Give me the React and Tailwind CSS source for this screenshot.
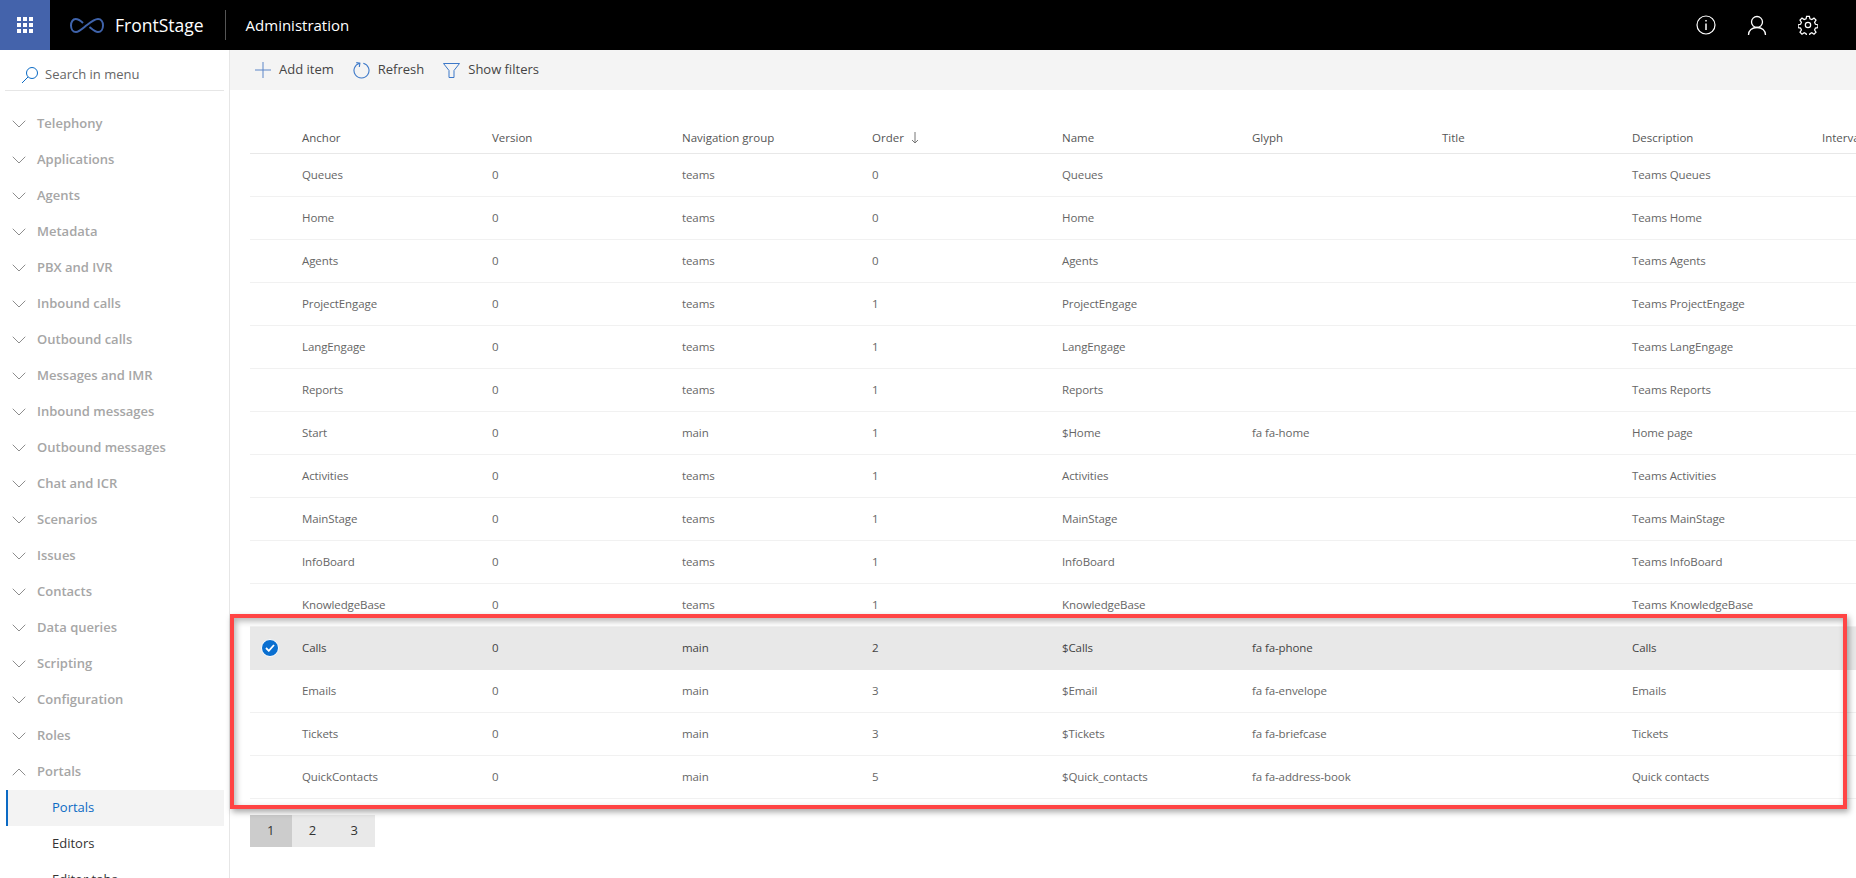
import { ChevronDown, ChevronUp } from 'lucide-react';

const menu = [
  'Telephony', 'Applications', 'Agents', 'Metadata', 'PBX and IVR', 'Inbound calls', 'Outbound calls',
  'Messages and IMR', 'Inbound messages', 'Outbound messages', 'Chat and ICR', 'Scenarios', 'Issues',
  'Contacts', 'Data queries', 'Scripting', 'Configuration', 'Roles',
];

const columns = ['Anchor', 'Version', 'Navigation group', 'Order', 'Name', 'Glyph', 'Title', 'Description', 'Interval'];

const rows = [
  ['Queues', '0', 'teams', '0', 'Queues', '', '', 'Teams Queues'],
  ['Home', '0', 'teams', '0', 'Home', '', '', 'Teams Home'],
  ['Agents', '0', 'teams', '0', 'Agents', '', '', 'Teams Agents'],
  ['ProjectEngage', '0', 'teams', '1', 'ProjectEngage', '', '', 'Teams ProjectEngage'],
  ['LangEngage', '0', 'teams', '1', 'LangEngage', '', '', 'Teams LangEngage'],
  ['Reports', '0', 'teams', '1', 'Reports', '', '', 'Teams Reports'],
  ['Start', '0', 'main', '1', '$Home', 'fa fa-home', '', 'Home page'],
  ['Activities', '0', 'teams', '1', 'Activities', '', '', 'Teams Activities'],
  ['MainStage', '0', 'teams', '1', 'MainStage', '', '', 'Teams MainStage'],
  ['InfoBoard', '0', 'teams', '1', 'InfoBoard', '', '', 'Teams InfoBoard'],
  ['KnowledgeBase', '0', 'teams', '1', 'KnowledgeBase', '', '', 'Teams KnowledgeBase'],
  ['Calls', '0', 'main', '2', '$Calls', 'fa fa-phone', '', 'Calls'],
  ['Emails', '0', 'main', '3', '$Email', 'fa fa-envelope', '', 'Emails'],
  ['Tickets', '0', 'main', '3', '$Tickets', 'fa fa-briefcase', '', 'Tickets'],
  ['QuickContacts', '0', 'main', '5', '$Quick_contacts', 'fa fa-address-book', '', 'Quick contacts'],
];

function Logo() {
  return (
    <svg width="34" height="17" viewBox="0 0 34 17" fill="none" stroke="#3f63ab" strokeWidth="2">
      <path d="M13 6C10 3 7.500 2 5.500 2 3 2 1 5 1 8.500 1 12 3 15 6 15c3 0 6-3 11-7 5-4 8-6 11-6 3 0 5 3 5 6.500C33 12 31 15 28 15c-3 0-6-3-8.500-5" />
    </svg>
  );
}

function Waffle() {
  return (
    <svg width="16" height="16" viewBox="0 0 16 16" fill="white">
      {[0, 6, 12].map((y) => [0, 6, 12].map((x) => <rect key={`${x}-${y}`} x={x} y={y} width="4" height="4" />))}
    </svg>
  );
}

function ToolButton({ icon, label }) {
  return (
    <div className="flex items-center gap-[8px] text-[13px] text-[#444]">
      {icon}
      <span>{label}</span>
    </div>
  );
}

export default function App() {
  return (
    <div className="h-screen w-full overflow-hidden flex flex-col bg-white font-['Open_Sans',sans-serif] relative">
      {/* Top bar */}
      <header className="h-[50px] shrink-0 bg-black flex items-center text-white">
        <div className="w-[50px] h-full bg-[#4463ab] flex items-center justify-center">
          <Waffle />
        </div>
        <div className="ml-[20px] flex"><Logo /></div>
        <span className="ml-[11px] text-[17.5px]">FrontStage</span>
        <div className="ml-[21px] w-px h-[30px] bg-[#555]" />
        <span className="ml-[20px] text-[15px]">Administration</span>
        <div className="ml-auto flex items-center gap-[31px] pr-[38px]">
          <svg width="20" height="20" viewBox="0 0 20 20" fill="none" stroke="white" strokeWidth="1.2">
            <circle cx="10" cy="10" r="9" />
            <path d="M10 8.500V15" strokeWidth="1.500" />
            <path d="M10 5v1.500" strokeWidth="1.500" />
          </svg>
          <svg width="20" height="21" viewBox="0 0 20 21" fill="none" stroke="white" strokeWidth="1.3">
            <circle cx="10" cy="7" r="5.500" />
            <path d="M1.500 20c0-4.500 3.500-7.500 8.500-7.500s8.500 3 8.500 7.500" />
          </svg>
          <svg width="20" height="20" viewBox="0 0 24 24" fill="none" stroke="white" strokeWidth="1.500">
            <circle cx="12" cy="12" r="3.200" />
            <path d="M10.300 1.500h3.400l.6 3 2.300 1 2.600-1.700 2.400 2.400-1.700 2.600 1 2.300 3 .6v3.400l-3 .6-1 2.300 1.700 2.600-2.400 2.400-2.600-1.700-2.300 1-.6 3h-3.400l-.6-3-2.300-1-2.600 1.700-2.400-2.400 1.700-2.600-1-2.300-3-.6v-3.400l3-.6 1-2.300-1.700-2.600 2.400-2.400 2.600 1.700 2.300-1z" />
          </svg>
        </div>
      </header>

      <div className="flex flex-1 min-h-0">
        {/* Sidebar */}
        <aside className="w-[230px] shrink-0 border-r border-[#e6e6e6] pt-[5px] overflow-hidden">
          <div className="ml-[5px] mr-[5px] h-[36px] flex items-center border-b border-[#e6e6e6] pl-[15px] pt-[4px] gap-[5px] text-[13px] text-[#666]">
            <svg width="20" height="20" viewBox="0 0 20 20" fill="none" stroke="#0b6ac4" strokeWidth="1">
              <circle cx="12" cy="8" r="5.500" />
              <path d="M8 12l-6 6" />
            </svg>
            <span>Search in menu</span>
          </div>
          <nav className="pt-[15px]">
            {menu.map((item) => (
              <div key={item} className="h-[36px] flex items-center pl-[7px] gap-[6px] text-[13px] font-semibold text-[#a6a6a6]">
                <ChevronDown className="w-[24px] h-[24px] text-[#808080]" strokeWidth={0.9} />
                <span>{item}</span>
              </div>
            ))}
            <div className="h-[36px] flex items-center pl-[7px] gap-[6px] text-[13px] font-semibold text-[#a6a6a6]">
              <ChevronUp className="w-[24px] h-[24px] text-[#808080]" strokeWidth={0.9} />
              <span>Portals</span>
            </div>
            <div className="h-[36px] ml-[6px] mr-[5px] flex items-center pl-[44px] text-[13px] text-[#0b6ac4] bg-[#f3f3f3] border-l-2 border-[#0b6ac4]">
              Portals
            </div>
            <div className="h-[36px] flex items-center pl-[52px] text-[13px] text-[#333]">Editors</div>
            <div className="h-[36px] flex items-center pl-[52px] text-[13px] text-[#333]">Editor tabs</div>
          </nav>
        </aside>

        {/* Main */}
        <main className="flex-1 min-w-0 overflow-hidden">
          <div className="h-[40px] bg-[#f4f4f4] flex items-center pl-[25px] gap-[19px]">
            <ToolButton
              label="Add item"
              icon={
                <svg width="16" height="16" viewBox="0 0 16 16" stroke="#5c86c8" strokeWidth="1"><path d="M8 0v16M0 8h16" /></svg>
              }
            />
            <ToolButton
              label="Refresh"
              icon={
                <svg width="17" height="17" viewBox="0 0 17 17" fill="none" stroke="#3c78c8" strokeWidth="1.100">
                  <path d="M10.300 1.200A7.500 7.500 0 1 1 6.700 1.200" />
                  <path d="M3.300.6L6.900 1.200 6.300 5" />
                </svg>
              }
            />
            <ToolButton
              label="Show filters"
              icon={
                <svg width="17" height="15" viewBox="0 0 17 15" fill="none" stroke="#3c78c8" strokeWidth="1">
                  <path d="M.5.5h16L11 7.500V14.500H6V7.500z" />
                </svg>
              }
            />
          </div>

          <div className="pt-[30px] pl-[20px] w-[1800px]">
            <div className="h-[34px] flex items-center pl-[52px] pt-[2px] border-b border-[#e8e8e8] text-[11.5px] text-[#555]">
              {columns.map((c) => (
                <div key={c} className="w-[190px] shrink-0 flex items-center gap-[7px]">
                  {c}
                  {c === 'Order' && (
                    <svg width="8" height="12" viewBox="0 0 8 12" fill="none" stroke="#777"><path d="M4 0v11M1 8l3 3 3-3" /></svg>
                  )}
                </div>
              ))}
            </div>
            {rows.map((row) => {
              const selected = row[0] === 'Calls';
              return (
                <div
                  key={row[0]}
                  className={`h-[43px] flex items-center border-b text-[11.5px] tracking-[-0.1px] ${selected ? 'bg-[#e8e8e8] border-[#e8e8e8] text-[#444]' : 'border-[#f1f1f1] text-[#666]'}`}
                >
                  <div className="w-[52px] shrink-0 flex items-center pl-[11px]">
                    {selected && (
                      <div className="w-[18px] h-[18px] rounded-full bg-[#0a6fd0] border border-white flex items-center justify-center">
                        <svg width="10" height="8" viewBox="0 0 10 8" fill="none" stroke="white" strokeWidth="1.800"><path d="M1 4l2.800 2.800L9 1" /></svg>
                      </div>
                    )}
                  </div>
                  {row.map((cell, i) => (
                    <div key={i} className="w-[190px] shrink-0">{cell}</div>
                  ))}
                </div>
              );
            })}
            {/* Pager */}
            <div className="mt-[16px] flex text-[13px] text-[#333]">
              {['1', '2', '3'].map((p) => (
                <div key={p} className={`w-[41.67px] h-[32px] flex items-center justify-center ${p === '1' ? 'bg-[#cccccc]' : 'bg-[#e9e9e9]'}`}>
                  {p}
                </div>
              ))}
            </div>
          </div>
        </main>
      </div>

      {/* Red annotation round the last rows */}
      <div className="absolute left-[230px] top-[614px] w-[1617px] h-[195px] border-[4px] border-[#ff4444] shadow-[2px_3px_6px_rgba(0,0,0,0.35),inset_2px_3px_6px_rgba(0,0,0,0.3)]" />
    </div>
  );
}
